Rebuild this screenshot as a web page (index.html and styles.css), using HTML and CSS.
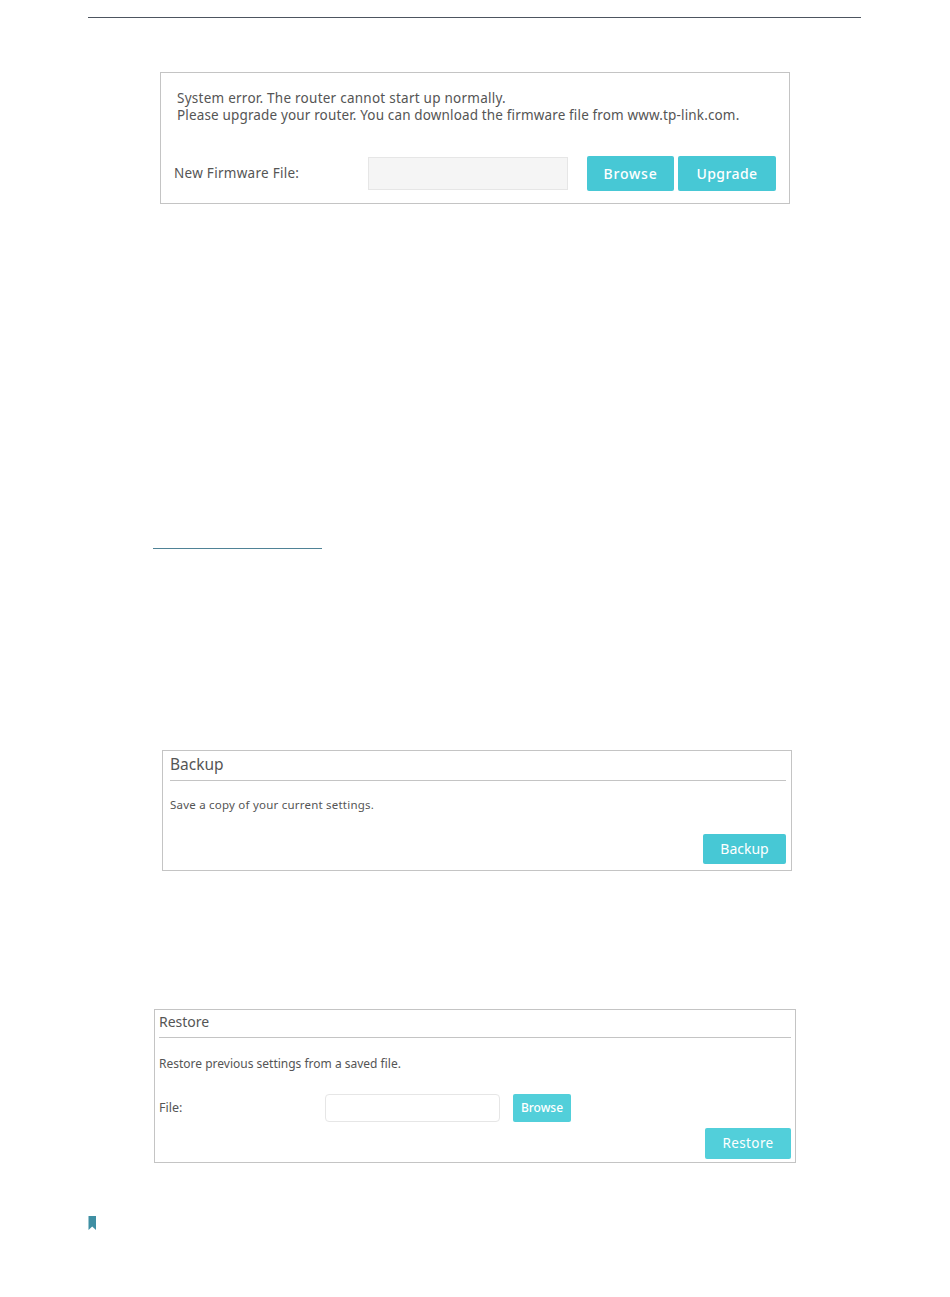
FILE: index.html
```html
<!DOCTYPE html>
<html lang="en">
<head>
<meta charset="utf-8">
<title>Firmware, backup and restore</title>
<link rel="stylesheet" href="styles.css">
</head>
<body>
<main class="page">
  <hr class="top-rule">

  <section class="card card-firmware">
    <p class="message message-first">System error. The router cannot start up normally.</p>
    <p class="message message-second">Please upgrade your router. You can download the firmware file from www.tp-link.com.</p>
    <div class="firmware-row">
      <span class="firmware-label">New Firmware File:</span>
      <div class="firmware-input"></div>
      <button class="btn btn-firmware-browse">Browse</button>
      <button class="btn btn-firmware-upgrade">Upgrade</button>
    </div>
  </section>

  <div class="link-rule"></div>

  <section class="card card-backup">
    <h2 class="backup-title">Backup</h2>
    <p class="backup-text">Save a copy of your current settings.</p>
    <div class="actions">
      <button class="btn btn-backup">Backup</button>
    </div>
  </section>

  <section class="card card-restore">
    <h2 class="restore-title">Restore</h2>
    <p class="restore-text">Restore previous settings from a saved file.</p>
    <div class="restore-row">
      <span class="restore-label">File:</span>
      <div class="restore-input"></div>
      <button class="btn btn-restore-browse">Browse</button>
    </div>
    <div class="actions">
      <button class="btn btn-restore">Restore</button>
    </div>
  </section>

  <svg class="bookmark" width="9" height="15" viewBox="0 0 9 15" aria-hidden="true">
    <path d="M0.5 0H8V14L4.2 10.5L0.5 14Z" fill="#3f8fa3"/>
  </svg>
</main>
</body>
</html>
```

FILE: styles.css
```css
* { box-sizing: border-box; }

html, body { margin: 0; background: #fff; }

body {
  font-family: "Noto Sans", "Open Sans", sans-serif;
  color: #555;
}

.page {
  width: 950px;
  height: 1297px;
  padding: 17px 89px 0 88px;
  display: flex;
  flex-direction: column;
  align-items: flex-start;
}

.top-rule {
  width: 773px;
  height: 1px;
  margin: 0;
  border: 0;
  background: #4d5560;
  flex: none;
}

.card {
  border: 1px solid #c4c4c4;
  background: #fff;
  flex: none;
}

p, h2 { margin: 0; font-weight: 400; }

.btn {
  border: 0;
  border-radius: 2px;
  background: #4acbd6;
  color: #fff;
  font-family: inherit;
  padding: 0;
  flex: none;
}

/* Firmware card */
.card-firmware {
  width: 630px;
  height: 132px;
  margin: 54px 0 0 72px;
  padding: 17px 13px 0 13px;
}

.message {
  padding-left: 3px;
  font-size: 13.5px;
  line-height: 17px;
  color: #555;
}

.message-first { letter-spacing: 0.25px; }
.message-second { letter-spacing: 0.15px; }

.firmware-row {
  display: flex;
  align-items: center;
  margin-top: 32px;
}

.firmware-label {
  width: 194px;
  padding-bottom: 2px;
  font-size: 13.5px;
  letter-spacing: 0.28px;
  color: #555;
}

.firmware-input {
  width: 200px;
  height: 33px;
  background: #f5f5f5;
  border: 1px solid #e6e6e6;
}

.btn-firmware-browse {
  width: 87px;
  height: 35px;
  margin-left: 19px;
  font-size: 14px;
  font-weight: 500;
  letter-spacing: 0.8px;
  background: #47c8d5;
}

.btn-firmware-upgrade {
  width: 98px;
  height: 35px;
  margin-left: 4px;
  font-size: 14px;
  font-weight: 500;
  letter-spacing: 0.4px;
  background: #47c8d5;
}

.link-rule {
  width: 169px;
  height: 1px;
  margin: 344px 0 0 65px;
  background: #4f8296;
  flex: none;
}

/* Backup card */
.card-backup {
  width: 630px;
  height: 121px;
  margin: 201px 0 0 74px;
  padding: 0 5px 0 7px;
}

.backup-title {
  height: 30px;
  border-bottom: 1px solid #c4c4c4;
  font-size: 15.5px;
  line-height: 27px;
  color: #555;
}

.backup-text {
  margin-top: 16px;
  font-size: 11.5px;
  line-height: 16px;
  letter-spacing: 0.22px;
}

.actions {
  display: flex;
  justify-content: flex-end;
}

.card-backup .actions { margin-top: 21px; }

.btn-backup {
  width: 83px;
  height: 30px;
  padding-bottom: 1px;
  font-size: 14px;
  background: #47c8d5;
}

/* Restore card */
.card-restore {
  width: 642px;
  height: 154px;
  margin: 138px 0 0 66px;
  padding: 0 4px 0 4px;
}

.restore-title {
  height: 28px;
  border-bottom: 1px solid #c4c4c4;
  font-size: 14px;
  line-height: 23px;
  color: #555;
}

.restore-text {
  margin-top: 17px;
  font-size: 12px;
  line-height: 17px;
}

.restore-row {
  display: flex;
  align-items: center;
  margin-top: 22px;
}

.restore-label {
  width: 166px;
  padding-bottom: 2px;
  font-size: 12.5px;
}

.restore-input {
  width: 175px;
  height: 28px;
  border: 1px solid #e6e6e6;
  border-radius: 4px;
}

.btn-restore-browse {
  width: 58px;
  height: 28px;
  margin-left: 13px;
  padding-bottom: 2px;
  font-size: 12px;
  font-weight: 500;
  background: #52cfda;
}

.card-restore .actions { margin-top: 6px; }

.btn-restore {
  width: 86px;
  height: 31px;
  padding-bottom: 2px;
  font-size: 13.5px;
  letter-spacing: 0.4px;
  background: #52cfda;
}

.bookmark {
  margin-top: 53px;
  flex: none;
}
```
